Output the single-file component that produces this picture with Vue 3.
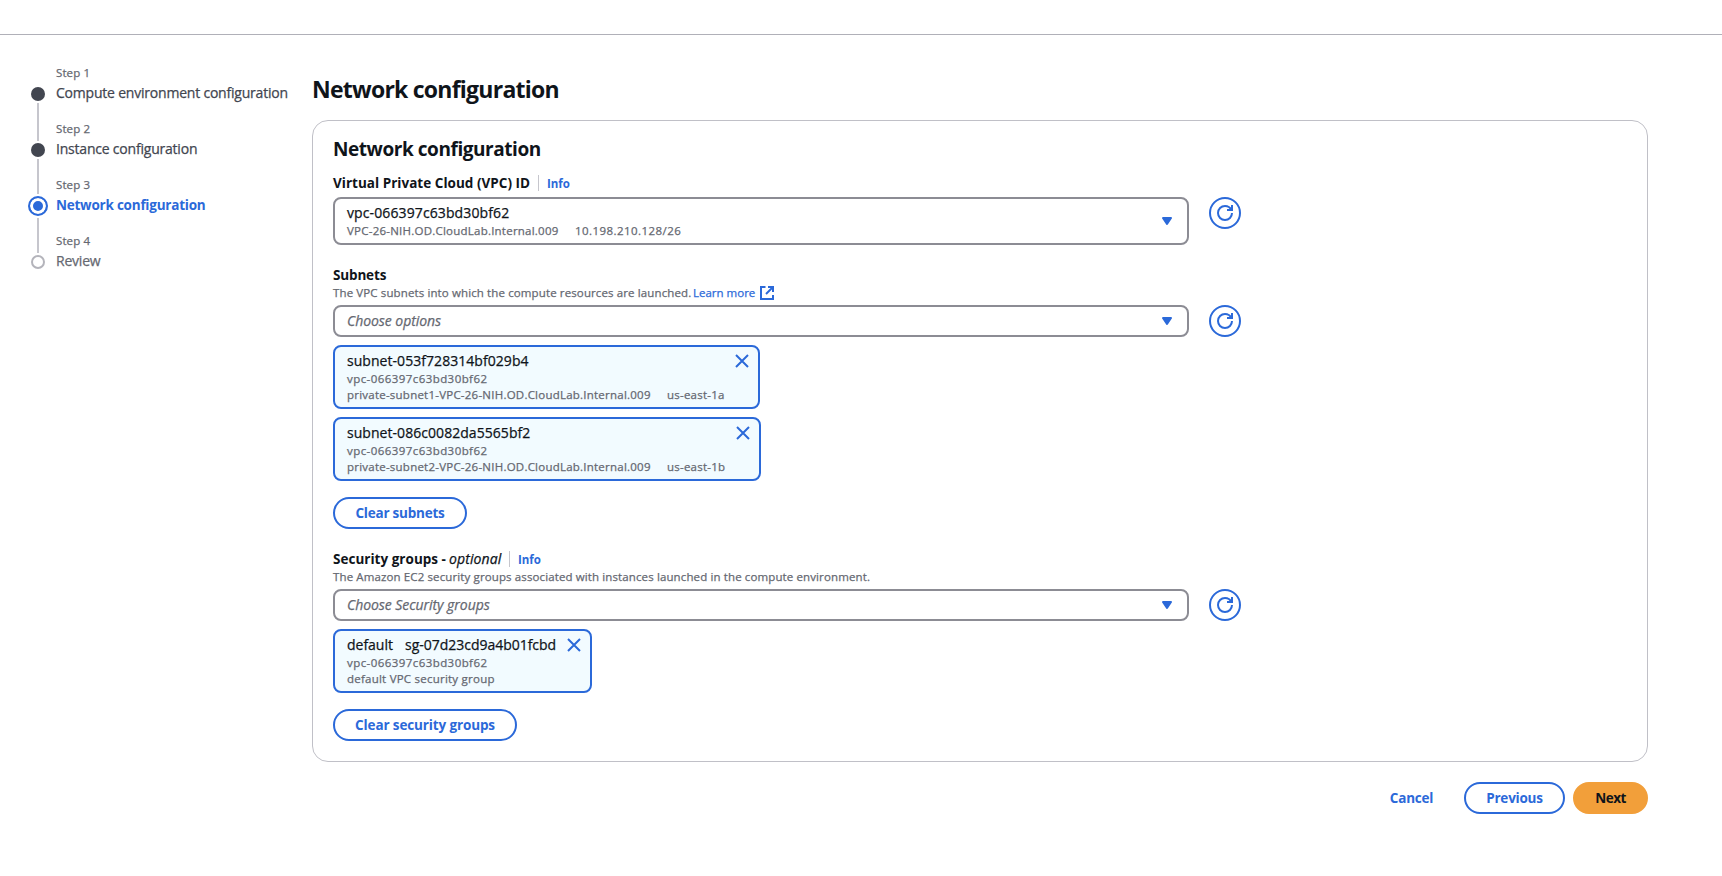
<script setup>
import { h } from 'vue'

const steps = [
  { n: 1, label: 'Compute environment configuration', state: 'done', fit: 'fit-a' },
  { n: 2, label: 'Instance configuration', state: 'done', fit: 'fit-a' },
  { n: 3, label: 'Network configuration', state: 'active', fit: 'fit-b' },
  { n: 4, label: 'Review', state: 'todo', fit: 'fit-a' },
]

const subnets = [
  {
    id: 'subnet-053f728314bf029b4',
    vpc: 'vpc-066397c63bd30bf62',
    name: 'private-subnet1-VPC-26-NIH.OD.CloudLab.Internal.009',
    zone: 'us-east-1a',
    size: 'w-first',
  },
  {
    id: 'subnet-086c0082da5565bf2',
    vpc: 'vpc-066397c63bd30bf62',
    name: 'private-subnet2-VPC-26-NIH.OD.CloudLab.Internal.009',
    zone: 'us-east-1b',
    size: 'w-second',
  },
]

const stroke = { fill: 'none', stroke: 'currentColor', 'stroke-width': 2 }
const box = { width: 16, height: 16, viewBox: '0 0 16 16', 'aria-hidden': 'true' }

const CaretIcon = () =>
  h('svg', box, [
    h('path', {
      d: 'M4 5h8l-4 6-4-6z',
      fill: 'currentColor',
      stroke: 'currentColor',
      'stroke-width': 2,
      'stroke-linejoin': 'round',
    }),
  ])
const RefreshIcon = () =>
  h('svg', box, [
    h('path', { ...stroke, d: 'M10 5h5V0' }),
    h('path', { ...stroke, d: 'M15 8a7 7 0 1 1-14 0 7 7 0 0 1 7-7c2.79 0 5.2 1.5 6.4 4' }),
  ])
const CloseIcon = () => h('svg', box, [h('path', { ...stroke, d: 'm2 2 12 12M14 2 2 14' })])
const ExternalIcon = () =>
  h('svg', box, [
    h('path', { ...stroke, d: 'M9 2h5v5' }),
    h('path', { ...stroke, d: 'm7 9 7-7' }),
    h('path', { ...stroke, d: 'M14 10v4H2V2h4.5' }),
  ])
</script>

<template>
  <div class="page">
    <div class="topbar"></div>
    <div class="wizard">
      <nav class="steps">
        <div v-for="s in steps" :key="s.n" class="step" :class="s.state">
          <div class="rail">
            <span class="seg top"></span>
            <span class="dot"></span>
            <span class="seg bottom"></span>
          </div>
          <div class="step-text">
            <div class="step-no">Step {{ s.n }}</div>
            <div class="step-label" :class="s.fit">{{ s.label }}</div>
          </div>
        </div>
      </nav>

      <main class="main">
        <h1>Network configuration</h1>

        <section class="card">
          <h2>Network configuration</h2>

          <div class="field">
            <div class="label-row">
              <span class="label vpc-label">Virtual Private Cloud (VPC) ID</span>
              <span class="divider"></span>
              <a class="info">Info</a>
            </div>
            <div class="control">
              <div class="select">
                <div class="value">
                  <div class="text id">vpc-066397c63bd30bf62</div>
                  <div class="small meta">
                    <span class="vpc-name">VPC-26-NIH.OD.CloudLab.Internal.009</span>
                    <span class="cidr">10.198.210.128/26</span>
                  </div>
                </div>
                <span class="icon"><CaretIcon /></span>
              </div>
              <button class="round"><RefreshIcon /></button>
            </div>
          </div>

          <div class="field subnets">
            <div class="label-row"><span class="label tight">Subnets</span></div>
            <div class="small desc">
              <span class="desc-text">The VPC subnets into which the compute resources are launched.</span>
              <a class="learn">Learn more</a>
              <span class="icon ext"><ExternalIcon /></span>
            </div>
            <div class="control">
              <div class="select">
                <div class="text placeholder">Choose options</div>
                <span class="icon"><CaretIcon /></span>
              </div>
              <button class="round"><RefreshIcon /></button>
            </div>
            <div v-for="t in subnets" :key="t.id" class="token" :class="t.size">
              <div>
                <div class="text token-id">{{ t.id }}</div>
                <div class="small id-small">{{ t.vpc }}</div>
                <div class="small meta"><span class="name">{{ t.name }}</span><span>{{ t.zone }}</span></div>
              </div>
              <span class="icon close"><CloseIcon /></span>
            </div>
            <button class="btn clear w-clear-subnets">Clear subnets</button>
          </div>

          <div class="field groups">
            <div class="label-row">
              <span class="label sg-label">Security groups - </span>
              <i class="optional">optional</i>
              <span class="divider"></span>
              <a class="info">Info</a>
            </div>
            <div class="small desc">
              <span>The Amazon EC2 security groups associated with instances launched in the compute environment.</span>
            </div>
            <div class="control">
              <div class="select">
                <div class="text placeholder">Choose Security groups</div>
                <span class="icon"><CaretIcon /></span>
              </div>
              <button class="round"><RefreshIcon /></button>
            </div>
            <div class="token w-group">
              <div>
                <div class="text pair"><span class="group-name">default</span><span>sg-07d23cd9a4b01fcbd</span></div>
                <div class="small id-small">vpc-066397c63bd30bf62</div>
                <div class="small">default VPC security group</div>
              </div>
              <span class="icon close"><CloseIcon /></span>
            </div>
            <button class="btn clear w-clear-groups">Clear security groups</button>
          </div>
        </section>

        <footer class="actions">
          <button class="btn link">Cancel</button>
          <button class="btn previous">Previous</button>
          <button class="btn primary">Next</button>
        </footer>
      </main>
    </div>
  </div>
</template>

<style>
body {
  background: #fff;
}
</style>

<style scoped>
* {
  box-sizing: border-box;
}
.page {
  height: 876px;
  overflow: hidden;
  background: #fff;
  color: #0f141a;
  font: 14px/20px 'Open Sans', 'Noto Sans', sans-serif;
  white-space: nowrap;
}
.topbar {
  height: 35px;
  border-bottom: 1px solid #b0b0b8;
}
.wizard {
  display: flex;
}

.steps {
  width: 312px;
  flex: none;
  padding: 29px 0 0 28px;
}
.step {
  display: flex;
  gap: 8px;
  height: 56px;
}
.rail {
  width: 20px;
  display: flex;
  flex-direction: column;
  align-items: center;
  gap: 2px;
}
.seg {
  width: 2px;
  background: #c6c6cd;
}
.seg.top {
  height: 21px;
}
.seg.bottom {
  flex: 1;
}
.step:first-child .top,
.step:last-child .bottom {
  background: transparent;
}
.dot {
  flex: none;
  width: 14px;
  height: 14px;
  border-radius: 50%;
}
.done .dot {
  background: #424650;
}
.todo .dot {
  border: 2px solid #b4b4bb;
}
.active .seg.top {
  height: 18px;
}
.active .dot {
  width: 20px;
  height: 20px;
  border: 2px solid #2b69d9;
  background: #2b69d9;
  box-shadow: inset 0 0 0 3px #fff;
}
.step-no,
.step-label,
.small,
.text,
.optional {
  -webkit-text-stroke: 0.25px currentColor;
}
.step-no {
  padding-top: 1px;
  font-size: 11.5px;
  line-height: 16px;
  color: #656871;
  letter-spacing: 0.1px;
}
.step-label {
  margin-top: 2px;
  color: #424650;
}
.todo .step-label {
  color: #656871;
}
.active .step-label {
  color: #2b69d9;
  font-weight: 700;
  -webkit-text-stroke: 0;
}
.fit-a {
  letter-spacing: -0.21px;
}
.fit-b {
  font-size: 13.5px;
  letter-spacing: -0.23px;
}

.main {
  width: 1336px;
  padding-top: 39px;
}
h1 {
  margin: 0 0 16px;
  font-size: 23px;
  line-height: 30px;
  font-weight: 700;
  letter-spacing: -0.76px;
}
.card {
  height: 642px;
  padding: 16px 20px 0;
  border: 1px solid #c0c0c7;
  border-radius: 16px;
}
h2 {
  margin: 0 0 12px;
  font-size: 19px;
  line-height: 24px;
  font-weight: 700;
  letter-spacing: -0.44px;
}
.label-row {
  display: flex;
  align-items: center;
  height: 20px;
}
.label {
  font-weight: 700;
  font-size: 13.5px;
}
.vpc-label {
  width: 197px;
  letter-spacing: 0.02px;
}
.tight {
  letter-spacing: -0.15px;
}
.sg-label {
  width: 116px;
  letter-spacing: 0.02px;
}
.optional {
  width: 52px;
  letter-spacing: 0.1px;
}
.divider {
  width: 1px;
  height: 16px;
  margin: 0 8px;
  background: #c6c6cd;
}
.info {
  font-size: 11.5px;
  line-height: 18px;
  font-weight: 700;
  letter-spacing: -0.05px;
  color: #2b69d9;
  padding-top: 2px;
}
.small {
  font-size: 11.5px;
  line-height: 16px;
  height: 16px;
  color: #656871;
  letter-spacing: 0.23px;
}
.desc {
  display: flex;
  letter-spacing: 0.12px;
}
.desc-text {
  width: 357px;
}
.learn {
  width: 63px;
  margin-left: 3px;
  color: #2b69d9;
  letter-spacing: 0;
}
.control {
  display: flex;
  align-items: flex-start;
  gap: 20px;
  margin-top: 4px;
}
.select {
  width: 856px;
  min-height: 32px;
  display: flex;
  align-items: center;
  justify-content: space-between;
  padding: 4px 12px;
  border: 2px solid #8c8c94;
  border-radius: 8px;
}
.icon {
  display: flex;
  color: #2b69d9;
}
.id {
  letter-spacing: 0.11px;
}
.token-id {
  letter-spacing: 0.05px;
}
.meta {
  display: flex;
}
.vpc-name {
  width: 228px;
}
.cidr {
  letter-spacing: 0.44px;
}
.placeholder {
  font-style: italic;
  color: #656871;
  letter-spacing: -0.05px;
}
.round {
  width: 32px;
  height: 32px;
  display: flex;
  align-items: center;
  justify-content: center;
  padding: 0;
  border: 2px solid #2b69d9;
  border-radius: 50%;
  background: #fff;
  color: #2b69d9;
}
.ext {
  margin-left: 3px;
}
.subnets,
.groups {
  margin-top: 20px;
}
.token {
  height: 64px;
  margin-top: 8px;
  padding: 4px 8px 0 12px;
  display: flex;
  justify-content: space-between;
  border: 2px solid #2b69d9;
  border-radius: 8px;
  background: #f2fbff;
}
.w-first {
  width: 427px;
}
.w-second {
  width: 428px;
}
.w-group {
  width: 259px;
}
.id-small {
  letter-spacing: 0.43px;
}
.name {
  width: 320px;
}
.pair {
  display: flex;
  letter-spacing: -0.02px;
}
.group-name {
  width: 58px;
}
.close {
  margin-top: 2px;
  height: 16px;
}
.btn {
  display: flex;
  align-items: center;
  justify-content: center;
  height: 32px;
  padding: 0;
  border: 2px solid #2b69d9;
  border-radius: 16px;
  background: #fff;
  color: #2b69d9;
  font: 700 13.5px/20px 'Open Sans', 'Noto Sans', sans-serif;
  letter-spacing: -0.22px;
}
.clear {
  margin-top: 16px;
}
.w-clear-subnets {
  width: 134px;
}
.w-clear-groups {
  width: 184px;
  letter-spacing: -0.13px;
}
.actions {
  display: flex;
  justify-content: flex-end;
  padding-top: 20px;
}
.link {
  border-color: transparent;
  width: 83px;
  margin-right: 11px;
}
.previous {
  width: 101px;
  margin-right: 8px;
}
.primary {
  width: 75px;
  border-color: #f29f3a;
  background: #f29f3a;
  color: #0f141a;
  letter-spacing: -0.5px;
}
</style>
